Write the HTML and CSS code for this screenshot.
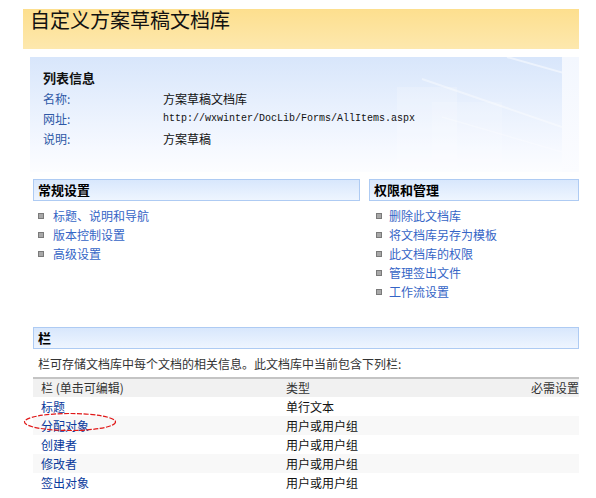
FILE: index.html
```html
<!DOCTYPE html>
<html lang="zh-CN">
<head>
<meta charset="utf-8">
<title>自定义方案草稿文档库</title>
<link rel="stylesheet" href="styles.css">
</head>
<body>
<div class="page">
  <header class="banner"><h1>自定义方案草稿文档库</h1></header>

  <section class="info">
    <div class="info-main">
      <h2>列表信息</h2>
      <div class="info-row"><span class="label">名称:</span><span class="value">方案草稿文档库</span></div>
      <div class="info-row"><span class="label">网址:</span><span class="value mono">http://wxwinter/DocLib/Forms/AllItems.aspx</span></div>
      <div class="info-row"><span class="label">说明:</span><span class="value">方案草稿</span></div>
      <svg class="watermark" width="260" height="115" viewBox="0 0 260 115">
        <rect x="95" y="30" width="60" height="85" fill="#ffffff" opacity="0.2"/>
        <rect x="130" y="45" width="70" height="70" fill="#ffffff" opacity="0.15"/>
        <line x1="120" y1="22" x2="260" y2="70" stroke="#ffffff" stroke-width="2" opacity="0.4"/>
        <line x1="205" y1="0" x2="262" y2="16" stroke="#ffffff" stroke-width="2" opacity="0.5"/>
        <line x1="140" y1="60" x2="260" y2="95" stroke="#ffffff" stroke-width="1.5" opacity="0.3"/>
      </svg>
    </div>
    <div class="info-edge"></div>
  </section>

  <div class="columns">
    <section class="panel panel-left">
      <h3 class="section-head">常规设置</h3>
      <ul class="links">
        <li><a href="#">标题、说明和导航</a></li>
        <li><a href="#">版本控制设置</a></li>
        <li><a href="#">高级设置</a></li>
      </ul>
    </section>
    <section class="panel panel-right">
      <h3 class="section-head">权限和管理</h3>
      <ul class="links">
        <li><a href="#">删除此文档库</a></li>
        <li><a href="#">将文档库另存为模板</a></li>
        <li><a href="#">此文档库的权限</a></li>
        <li><a href="#">管理签出文件</a></li>
        <li><a href="#">工作流设置</a></li>
      </ul>
    </section>
  </div>

  <section class="fields">
    <h3 class="section-head">栏</h3>
    <p class="desc">栏可存储文档库中每个文档的相关信息。此文档库中当前包含下列栏:</p>
    <div class="table">
      <div class="trow thead"><span class="c1">栏 (单击可编辑)</span><span class="c2">类型</span><span class="c3">必需设置</span></div>
      <div class="trow"><a class="c1" href="#">标题</a><span class="c2">单行文本</span><span class="c3"></span></div>
      <div class="trow alt"><a class="c1" href="#">分配对象</a><span class="c2">用户或用户组</span><span class="c3"></span></div>
      <div class="trow"><a class="c1" href="#">创建者</a><span class="c2">用户或用户组</span><span class="c3"></span></div>
      <div class="trow alt"><a class="c1" href="#">修改者</a><span class="c2">用户或用户组</span><span class="c3"></span></div>
      <div class="trow"><a class="c1" href="#">签出对象</a><span class="c2">用户或用户组</span><span class="c3"></span></div>
    </div>
  </section>

  <svg class="mark" width="94" height="20" viewBox="0 0 94 20">
    <ellipse cx="47" cy="10" rx="45.5" ry="8.5" fill="none" stroke="#e01818" stroke-width="1.2" stroke-dasharray="5 1.5"/>
  </svg>
</div>
</body>
</html>
```

FILE: styles.css
```css
html, body {
  margin: 0;
  padding: 0;
  background: #ffffff;
}

body {
  font-family: "Noto Sans CJK SC", "Noto Sans", sans-serif;
  font-size: 12px;
  color: #000000;
  width: 596px;
  height: 498px;
  overflow: hidden;
}

.page {
  position: relative;
  width: 556px;
  margin-left: 23px;
  padding-top: 9px;
  overflow: hidden;
}

.banner {
  height: 40px;
  background: linear-gradient(to bottom, #fddf8e, #fde8ae);
}

.banner h1 {
  margin: 0;
  padding-left: 7px;
  font-size: 20px;
  font-weight: normal;
  line-height: 21px;
  color: #111111;
}

.info {
  display: flex;
  margin-top: 8px;
  margin-left: 7px;
  height: 115px;
}

.info-main {
  position: relative;
  width: 532px;
  padding: 11px 0 0 13px;
  box-sizing: border-box;
  background: linear-gradient(to bottom, #d8e6fb, #f6f9ff 80%, #fcfdff);
  overflow: hidden;
}

.info-edge {
  flex: 1;
  background: linear-gradient(to bottom, #f3f7fe, #fbfcff);
}

.info h2 {
  margin: 0 0 2px;
  font-size: 13px;
  font-weight: bold;
  line-height: 19px;
  color: #111111;
}

.info-row {
  position: relative;
  z-index: 1;
  display: flex;
  line-height: 20px;
}

.label {
  width: 120px;
  color: #2d58a6;
}

.value {
  color: #111111;
}

.mono {
  font-family: "Liberation Mono", monospace;
  font-size: 10px;
}

.watermark {
  position: absolute;
  right: 0;
  top: 0;
}

.columns {
  display: flex;
  gap: 9px;
  margin-top: 7px;
  margin-left: 10px;
}

.panel-left {
  width: 327px;
}

.panel-right {
  flex: 1;
}

.section-head {
  margin: 0;
  height: 22px;
  box-sizing: border-box;
  border: 1px solid #aecbf3;
  padding-left: 4px;
  font-size: 13px;
  font-weight: bold;
  line-height: 20px;
  color: #000000;
  background: linear-gradient(to bottom, #d8e7fc, #eef5ff);
}

.links {
  list-style: none;
  margin: 5px 0 0;
  padding: 0;
}

.links li {
  display: flex;
  align-items: center;
  height: 19px;
  padding-left: 5px;
}

.panel-right .links li {
  padding-left: 7px;
}

.links li::before {
  content: "";
  width: 4px;
  height: 4px;
  margin-right: 9px;
  background: #a8a8a8;
  border: 1px solid #7a7a7a;
  flex: none;
}

.panel-right .links li::before {
  margin-right: 7px;
}

.links a {
  color: #3565c6;
  text-decoration: none;
}

.fields {
  margin-top: 26px;
  margin-left: 10px;
}

.desc {
  margin: 5px 0 4px;
  padding-left: 5px;
  line-height: 19px;
  color: #333333;
}

.table {
  display: flex;
  flex-direction: column;
}

.trow {
  display: flex;
  height: 19px;
  line-height: 19px;
  padding-left: 8px;
}

.thead {
  height: 20px;
  border-top: 2px solid #c4c4c4;
  box-sizing: border-box;
  line-height: 18px;
  background: #f1f1f1;
  color: #333333;
}

.alt {
  background: #f8f8f8;
}

.c1 {
  width: 245px;
  color: #0a3a9c;
  text-decoration: none;
}

.thead .c1 {
  color: #333333;
}

.c2 {
  flex: 1;
  color: #111111;
}

.thead .c2,
.thead .c3 {
  color: #333333;
}

.c3 {
  text-align: right;
}

.mark {
  position: absolute;
  left: 0;
  top: 412px;
}
```
